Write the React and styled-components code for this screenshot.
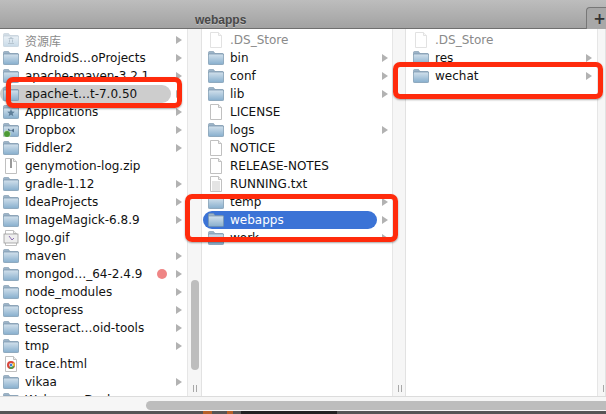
import React from 'react';
import styled, { createGlobalStyle } from 'styled-components';

const GlobalStyle = createGlobalStyle`
	html, body { margin: 0; padding: 0; background: #fff; overflow: hidden; }
	body { font-family: "DejaVu Sans", "Noto Sans CJK SC", sans-serif; }
`;

const Window = styled.div`
	position: relative;
	width: 606px;
	height: 414px;
	overflow: hidden;
	display: flex;
	flex-direction: column;
`;

const TitleBar = styled.div`
	height: 29px;
	flex: none;
	display: flex;
	align-items: flex-end;
	justify-content: space-between;
	padding-left: 195px;
	box-sizing: border-box;
	background: linear-gradient(#bdbdbd, #a2a2a2);
	border-bottom: 1px solid #6f6f6f;
`;

const Title = styled.div`
	font-family: "Liberation Sans", sans-serif;
	font-size: 12px;
	line-height: 13px;
	padding-bottom: 1px;
	font-weight: bold;
	color: #484848;
	text-shadow: 0 1px 0 #c4c4c4;
`;

const NewTab = styled.div`
	width: 20px;
	height: 22px;
	box-sizing: border-box;
	margin-bottom: -1px;
	padding-left: 6px;
	display: flex;
	align-items: center;
	justify-content: center;
	font-size: 15px;
	font-weight: bold;
	color: #333;
	background: #a8a8a8;
	border-left: 1px solid #777;
	border-top: 1px solid #777;
	border-top-left-radius: 4px;
`;

const Columns = styled.div`
	flex: none;
	height: 367px;
	display: flex;
`;

const Column = styled.div`
	flex: none;
	width: ${p => p.$width}px;
	display: flex;
`;

const List = styled.div`
	flex: 1;
	min-width: 0;
	overflow: hidden;
	padding-top: 2px;
	background: #fff;
`;

const Gutter = styled.div`
	position: relative;
	flex: none;
	width: ${p => p.$width}px;
	box-sizing: border-box;
	background: #f6f6f6;
	border-left: 1px solid #e6e6e6;
	border-right: 1px solid #e2e2e2;
`;

const Thumb = styled.div`
	position: absolute;
	left: 3px;
	top: 251px;
	width: 8px;
	height: 90px;
	border-radius: 4px;
	background: #bdbdbd;
`;

const Grip = styled.div`
	position: absolute;
	left: 5px;
	top: 356px;
	width: 2px;
	height: 7px;
	border-left: 1px solid #a8a8a8;
	border-right: 1px solid #a8a8a8;
`;

const Row = styled.div`
	height: 18px;
	display: flex;
	align-items: center;
	margin-left: ${p => p.$offset}px;
	padding-right: ${p => p.$trail}px;
`;

const Label = styled.div`
	flex: 1;
	min-width: 0;
	height: 18px;
	display: flex;
	align-items: center;
	gap: 6px;
	padding-left: ${p => p.$pad}px;
	font-size: 12px;
	white-space: nowrap;
	color: ${p => (p.$selected === 'active' ? '#fff' : p.$dim ? '#8a8a8a' : '#111')};
	background: ${p => (p.$selected === 'active' ? '#3b73d6' : p.$selected === 'idle' ? '#cdcdcd' : 'transparent')};
	border-radius: 9px;
`;

const Name = styled.span`
	flex: 1;
	min-width: 0;
`;

const Tag = styled.span`
	flex: none;
	width: 10px;
	height: 10px;
	margin-right: 4px;
	border-radius: 50%;
	background: #ef8585;
`;

const Chevron = styled.div`
	flex: none;
	width: 0;
	height: 0;
	margin-left: 5px;
	border-left: 6px solid #b2b2b2;
	border-top: 4px solid transparent;
	border-bottom: 4px solid transparent;
	visibility: ${p => (p.$hidden ? 'hidden' : 'visible')};
`;

const Footer = styled.div`
	flex: none;
	height: 15px;
	box-sizing: border-box;
	display: flex;
	align-items: center;
	padding-left: 146px;
	background: #f6f6f6;
	border-top: 1px solid #dcdcdc;
`;

const HThumb = styled.div`
	flex: 1;
	height: 9px;
	margin-top: 3px;
	border-radius: 5px 0 0 5px;
	background: #bdbdbd;
`;

const Desktop = styled.div`
	flex: 1;
	display: flex;
	padding-left: 203px;
	background: #555;
`;

const Speck = styled.div`
	flex: none;
	width: ${p => p.$width}px;
	margin-right: ${p => p.$gap}px;
	background: ${p => p.$color};
`;

const Callout = styled.div`
	position: absolute;
	left: ${p => p.$x}px;
	top: ${p => p.$y}px;
	width: ${p => p.$w}px;
	height: ${p => p.$h}px;
	box-sizing: border-box;
	border: 5px solid #ff2b0c;
	border-radius: 7px;
	box-shadow: 0 1px 2px rgba(0, 0, 0, .35);
`;

const Glyph = styled.svg`
	flex: none;
	display: block;
	opacity: ${p => (p.$dim ? 0.45 : 1)};
`;

const FolderIcon = ({ dim, emblem }) => (
	<Glyph $dim={dim} width="16" height="14" viewBox="0 0 16 14">
		<defs>
			<linearGradient id="folderFill" x1="0" y1="0" x2="0" y2="1">
				<stop offset="0" stopColor="#d3e1ec" />
				<stop offset="1" stopColor="#86aecd" />
			</linearGradient>
		</defs>
		<path d="M.5 3V1.500q0-1 1-1h4l1.500 2h7.500q1 0 1 1V4H.5z" fill="#9db4c8" stroke="#7b95ab" strokeWidth=".6" />
		<rect x=".4" y="3" width="15.2" height="10.6" rx="1" fill="url(#folderFill)" stroke="#7391a9" strokeWidth=".7" />
		{emblem === 'library' && <path d="M5 11h6v-1H5zM6 9.500h1v-3H6zM9 9.500h1v-3H9zM4.800 6h6.400L8 4z" fill="#5f7f99" />}
		{emblem === 'apps' && <path d="M8 4l1 2.500 2.800.2-2.100 1.800.7 2.700L8 9.800l-2.400 1.400.7-2.700-2.100-1.800L7 6.500z" fill="#5f7f99" />}
		{emblem === 'dropbox' && <path d="M5 5.500l3 2-3 2zM11 5.500l-3 2 3 2z" fill="#52708a" />}
		{emblem === 'dropbox' && <circle cx="4" cy="11" r="3.500" fill="#4c9a35" stroke="#fff" strokeWidth=".5" />}
	</Glyph>
);

const FileIcon = ({ dim, kind }) => (
	<Glyph $dim={dim} width="16" height="16" viewBox="0 0 16 16">
		<path d="M2.500.5h8l3 3v12h-11z" fill="#fff" stroke="#c0c0c0" />
		<path d="M10.500.5v3h3" fill="#eee" stroke="#c0c0c0" />
		{kind === 'text' && <path d="M4 6h8M4 8h8M4 10h8M4 12h8M4 14h8" stroke="#bbb" strokeWidth=".8" />}
		{kind === 'zip' && <path d="M7 1v9h2V1z" fill="#9a9a9a" />}
		{kind === 'gif' && <rect x="1" y="4" width="14" height="9" fill="#eee" stroke="#999" strokeWidth=".8" />}
		{kind === 'gif' && <path d="M6 6l3 4 2-2" stroke="#8a6fb0" fill="none" />}
		{kind === 'html' && <circle cx="8" cy="9" r="4" fill="#d9453a" />}
		{kind === 'html' && <path d="M8 9l3.500 1.500A4 4 0 0 1 6 12.500z" fill="#4aa04a" />}
		{kind === 'html' && <path d="M8 9l3.500 1.500A4 4 0 0 0 11 6.300z" fill="#f0c330" />}
		{kind === 'html' && <circle cx="8" cy="9" r="1.700" fill="#3d7fdc" stroke="#fff" strokeWidth=".6" />}
	</Glyph>
);

const leftItems = [
	{ name: '资源库', dim: true, emblem: 'library' },
	{ name: 'AndroidS…oProjects' },
	{ name: 'apache-maven-3.2.1' },
	{ name: 'apache-t…t-7.0.50', selected: 'idle' },
	{ name: 'Applications', emblem: 'apps' },
	{ name: 'Dropbox', emblem: 'dropbox' },
	{ name: 'Fiddler2' },
	{ name: 'genymotion-log.zip', file: 'zip' },
	{ name: 'gradle-1.12' },
	{ name: 'IdeaProjects' },
	{ name: 'ImageMagick-6.8.9' },
	{ name: 'logo.gif', file: 'gif' },
	{ name: 'maven' },
	{ name: 'mongod…_64-2.4.9', tag: true },
	{ name: 'node_modules' },
	{ name: 'octopress' },
	{ name: 'tesseract…oid-tools' },
	{ name: 'tmp' },
	{ name: 'trace.html', file: 'html' },
	{ name: 'vikaa' },
	{ name: 'WebcomeDesk' },
];

const middleItems = [
	{ name: '.DS_Store', file: 'plain', dim: true },
	{ name: 'bin' },
	{ name: 'conf' },
	{ name: 'lib' },
	{ name: 'LICENSE', file: 'plain' },
	{ name: 'logs' },
	{ name: 'NOTICE', file: 'plain' },
	{ name: 'RELEASE-NOTES', file: 'plain' },
	{ name: 'RUNNING.txt', file: 'text' },
	{ name: 'temp' },
	{ name: 'webapps', selected: 'active' },
	{ name: 'work' },
];

const rightItems = [
	{ name: '.DS_Store', file: 'plain', dim: true },
	{ name: 'res' },
	{ name: 'wechat' },
];

const Items = ({ items, offset, pad, trail }) => items.map(item => (
	<Row key={item.name} $offset={offset} $trail={trail}>
		<Label $pad={pad} $selected={item.selected} $dim={item.dim}>
			{item.file
				? <FileIcon kind={item.file} dim={item.dim} />
				: <FolderIcon emblem={item.emblem} dim={item.dim} />}
			<Name>{item.name}</Name>
			{item.tag && <Tag />}
		</Label>
		<Chevron $hidden={Boolean(item.file)} />
	</Row>
));

export default function App() {
	return (
		<Window>
			<GlobalStyle />
			<TitleBar>
				<Title>webapps</Title>
				<NewTab>+</NewTab>
			</TitleBar>
			<Columns>
				<Column $width={202}>
					<List>
						<Items items={leftItems} offset={0} pad={3} trail={5} />
					</List>
					<Gutter $width={15}>
						<Thumb />
						<Grip />
					</Gutter>
				</Column>
				<Column $width={204}>
					<List>
						<Items items={middleItems} offset={1} pad={5} trail={4} />
					</List>
					<Gutter $width={14}>
						<Grip />
					</Gutter>
				</Column>
				<Column $width={200}>
					<List>
						<Items items={rightItems} offset={1} pad={6} trail={5} />
					</List>
					<Gutter $width={9}>
						<Grip />
					</Gutter>
				</Column>
			</Columns>
			<Footer>
				<HThumb />
			</Footer>
			<Desktop>
				<Speck $width={9} $gap={15} $color="#b5602a" />
				<Speck $width={6} $gap={8} $color="#b5602a" />
				<Speck $width={96} $gap={0} $color="#222" />
			</Desktop>
			<Callout $x={6} $y={77} $w={176} $h={31} />
			<Callout $x={185} $y={194} $w={213} $h={48} />
			<Callout $x={393} $y={62} $w={210} $h={37} />
		</Window>
	);
}
